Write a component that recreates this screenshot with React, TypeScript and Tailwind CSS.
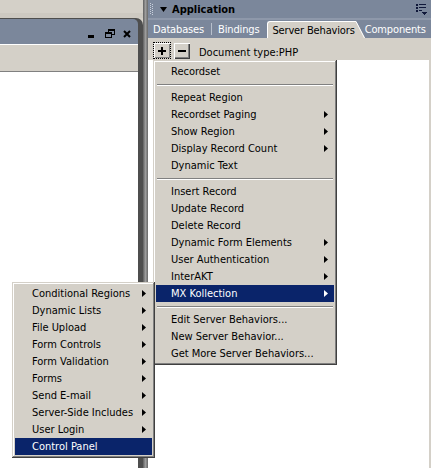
import React from "react";

type Item = { label: string; sub?: boolean; active?: boolean };
type Row = Item | "sep";

const serverMenu: Row[] = [
  { label: "Recordset" },
  "sep",
  { label: "Repeat Region" },
  { label: "Recordset Paging", sub: true },
  { label: "Show Region", sub: true },
  { label: "Display Record Count", sub: true },
  { label: "Dynamic Text" },
  "sep",
  { label: "Insert Record" },
  { label: "Update Record" },
  { label: "Delete Record" },
  { label: "Dynamic Form Elements", sub: true },
  { label: "User Authentication", sub: true },
  { label: "InterAKT", sub: true },
  { label: "MX Kollection", sub: true, active: true },
  "sep",
  { label: "Edit Server Behaviors..." },
  { label: "New Server Behavior..." },
  { label: "Get More Server Behaviors..." },
];

const kollectionMenu: Row[] = [
  { label: "Conditional Regions", sub: true },
  { label: "Dynamic Lists", sub: true },
  { label: "File Upload", sub: true },
  { label: "Form Controls", sub: true },
  { label: "Form Validation", sub: true },
  { label: "Forms", sub: true },
  { label: "Send E-mail", sub: true },
  { label: "Server-Side Includes", sub: true },
  { label: "User Login", sub: true },
  { label: "Control Panel", active: true },
];

function Arrow({ white }: { white?: boolean }) {
  return (
    <svg width="4" height="7" viewBox="0 0 4 7" className="ml-auto shrink-0">
      <path d="M0 0L4 3.5L0 7z" fill={white ? "#ffffff" : "#000000"} />
    </svg>
  );
}

function PopupMenu({ rows, className, itemPad }: { rows: Row[]; className: string; itemPad: string }) {
  return (
    <div
      className={`absolute flex flex-col bg-[#d4d0c8] p-[3px] shadow-[inset_-1px_-1px_0_#404040,inset_1px_1px_0_#d4d0c8,inset_-2px_-2px_0_#808080,inset_2px_2px_0_#ffffff] ${className}`}
    >
      {rows.map((r, i) =>
        r === "sep" ? (
          <div key={i} className="flex h-[9px] flex-col justify-center px-[1px]">
            <div className="h-px bg-[#808080]" />
            <div className="h-px bg-white" />
          </div>
        ) : (
          <div
            key={i}
            className={`flex h-[17px] items-center pr-[6px] ${itemPad} ${r.active ? "bg-[#0a246a] text-white" : "text-black"}`}
          >
            <span className="whitespace-nowrap">{r.label}</span>
            {r.sub && <Arrow white={r.active} />}
          </div>
        )
      )}
    </div>
  );
}

function TitleButtons() {
  return (
    <div className="flex items-end">
      {/* minimize */}
      <svg width="6" height="3" viewBox="0 0 6 3" shapeRendering="crispEdges">
        <rect x="0" y="0" width="6" height="3" fill="#000" />
      </svg>
      {/* restore */}
      <svg width="10" height="9" viewBox="0 0 10 9" className="ml-[11px]" shapeRendering="crispEdges" fill="#000">
        <path d="M3 0h7v2H3z M9 2h1v4H9z M3 2h1v1H3z M7 5h2v1H7z" />
        <path d="M0 3h7v2H0z M0 5h1v4H0z M6 5h1v4H6z M0 8h7v1H0z" />
      </svg>
      {/* close */}
      <svg width="8" height="8" viewBox="0 0 8 8" className="ml-[8px]">
        <path d="M1 1L7 7M7 1L1 7" stroke="#000" strokeWidth="2" />
      </svg>
    </div>
  );
}

function Grip() {
  const dots = [];
  for (let y = 0; y < 12; y += 2) {
    dots.push(<rect key={`a${y}`} x="0" y={y} width="1" height="1" />);
    dots.push(<rect key={`b${y}`} x="2" y={y + 1} width="1" height="1" />);
  }
  return (
    <svg width="3" height="12" viewBox="0 0 3 12" fill="#c9d0dc" shapeRendering="crispEdges">
      {dots}
    </svg>
  );
}

function OptionsIcon() {
  return (
    <svg width="11" height="11" viewBox="0 0 11 11" fill="#10183a" shapeRendering="crispEdges">
      <rect x="0" y="0" width="2" height="2" />
      <rect x="3" y="0" width="7" height="1" />
      <rect x="0" y="3" width="2" height="2" />
      <rect x="3" y="3" width="7" height="1" />
      <rect x="0" y="6" width="2" height="2" />
      <rect x="3" y="6" width="3" height="1" />
      <path d="M6 8h5l-2.5 3z" />
    </svg>
  );
}

export default function App() {
  return (
    <div className="relative flex h-[468px] w-[431px] overflow-hidden bg-[#d4d0c8] font-['DejaVu_Sans_Condensed','Liberation_Sans',sans-serif] text-[11px] leading-none">
      {/* Document window */}
      <div className="flex w-[143px] shrink-0 flex-col">
        <div className="h-[13px] bg-[#d4d0c8]" />
        <div className="h-[5px] bg-[#cdc9c1]" />
        <div className="flex flex-1 flex-col rounded-tr-[7px] bg-[#4e4e4e] pr-[5px] pt-px">
          <div className="flex h-[25px] items-end justify-end rounded-tr-[5px] bg-[#7b879b] pb-[6px] pr-[7px]">
            <TitleButtons />
          </div>
          <div className="h-px bg-white" />
          <div className="h-[26px] bg-[#d4d0c8]" />
          <div className="h-px bg-[#808080]" />
          <div className="flex-1 bg-white" />
        </div>
      </div>

      {/* Splitter */}
      <div className="w-[5px] shrink-0 bg-[linear-gradient(to_right,#5f5f5f,#9c9c9c_50%,#676767)]" />

      {/* Application panel */}
      <div className="flex w-[283px] shrink-0 flex-col">
        <div className="flex h-[18px] items-center bg-[#7b879b] pl-[2px]">
          <Grip />
          <svg width="7" height="5" viewBox="0 0 7 5" className="ml-[7px]">
            <path d="M0 0h7L3.5 5z" fill="#000" />
          </svg>
          <span className="ml-[5px] font-bold text-black">Application</span>
          <div className="ml-auto mr-[4px]">
            <OptionsIcon />
          </div>
        </div>
        <div className="h-[2px] bg-[#8e98aa]" />
        <div className="flex h-[18px] items-end overflow-hidden whitespace-nowrap bg-[#7b879b] pl-[5px] tracking-[-0.15px] text-white">
          <div className="flex h-full shrink-0 items-center">Databases</div>
          <div className="mb-[3px] ml-[7px] mr-[6px] h-[12px] w-px shrink-0 self-end bg-[#b8c0cc]" />
          <div className="flex h-full shrink-0 items-center">Bindings</div>
          <div className="ml-[8px] flex h-[17px] shrink-0">
            <div className="flex items-center rounded-tl-[3px] border-l border-t border-white bg-[#d4d0c8] pl-[4px] text-black">
              Server Behaviors
            </div>
            <svg width="10" height="17" viewBox="0 0 10 17" className="shrink-0">
              <path d="M0 0H1L10 17H0z" fill="#d4d0c8" />
              <path d="M0 0.5H1L9.5 17" stroke="#ffffff" fill="none" />
            </svg>
          </div>
          <div className="flex h-full shrink-0 items-center">Components</div>
        </div>
        <div className="flex h-[22px] items-start bg-[#d4d0c8] pl-[5px] pt-[4px]">
          <div className="flex h-[17px] w-[18px] items-center justify-center border border-dotted border-black shadow-[inset_1px_1px_0_#ffffff,inset_-1px_-1px_0_#808080]">
            <svg width="8" height="8" viewBox="0 0 8 8" shapeRendering="crispEdges">
              <path d="M3 0h2v8H3z M0 3h8v2H0z" fill="#000" />
            </svg>
          </div>
          <div className="ml-[3px] mt-px flex h-[16px] w-[16px] items-center justify-center shadow-[inset_1px_1px_0_#ffffff,inset_-1px_-1px_0_#404040,inset_-2px_-2px_0_#808080]">
            <svg width="8" height="2" viewBox="0 0 8 2" shapeRendering="crispEdges">
              <rect width="8" height="2" fill="#000" />
            </svg>
          </div>
          <span className="ml-[9px] self-center whitespace-nowrap pt-[2px] text-black">Document type:PHP</span>
        </div>
        <div className="flex flex-1">
          <div className="flex-1 bg-white" />
          <div className="w-[2px] bg-[#d4d0c8]" />
        </div>
      </div>

      <PopupMenu rows={serverMenu} className="left-[153px] top-[60px] w-[184px]" itemPad="pl-[15px]" />
      <PopupMenu rows={kollectionMenu} className="left-[12px] top-[282px] w-[143px]" itemPad="pl-[17px]" />
    </div>
  );
}
